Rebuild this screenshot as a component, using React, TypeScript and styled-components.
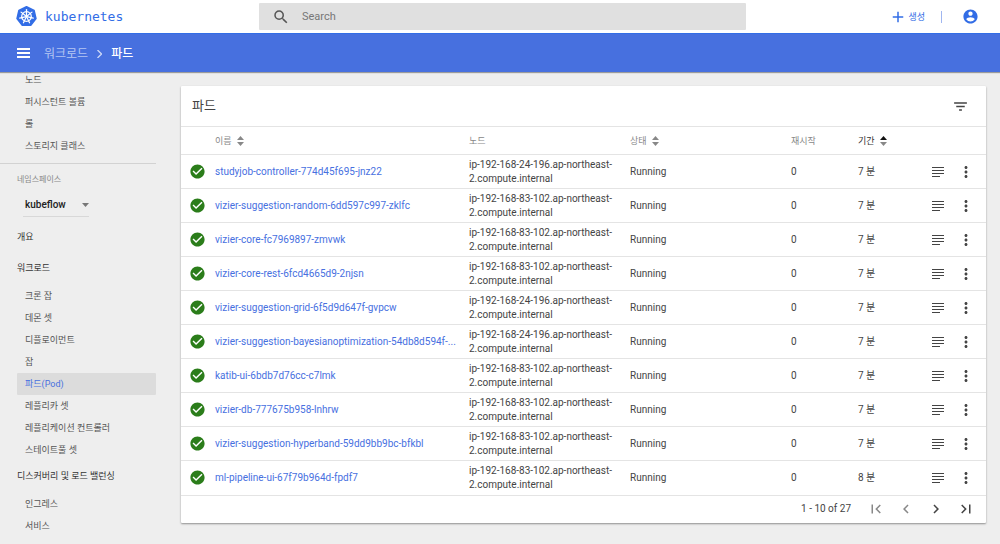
import React from "react";
import styled, { createGlobalStyle } from "styled-components";

const GlobalStyle = createGlobalStyle`
  * { box-sizing: border-box; }
  html, body, #root { height: 100%; }
  body {
    margin: 0;
    background: #eee;
    color: #444;
    font-family: Roboto, "Noto Sans CJK KR", sans-serif;
    font-size: 10px;
    line-height: 14px;
    overflow: hidden;
  }
  button, input, select { font: inherit; color: inherit; }
  a { color: inherit; text-decoration: none; }
`;

const Page = styled.div`
  display: flex;
  flex-direction: column;
  height: 100%;
`;

const TopBar = styled.header`
  display: flex;
  align-items: center;
  flex: none;
  height: 33px;
  padding: 0 21px 0 16px;
  background: #fff;
`;

const Brand = styled.a`
  display: flex;
  align-items: center;
  gap: 8px;
  width: 243px;
  color: #326de6;
  font-family: "DejaVu Sans Mono", monospace;
  font-size: 13px;
`;

const SearchBox = styled.label`
  display: flex;
  align-items: center;
  gap: 12px;
  width: 487px;
  height: 27px;
  padding: 0 13px;
  border-radius: 1px;
  background: #e0e0e0;
  color: #555;
`;

const SearchInput = styled.input`
  flex: 1;
  min-width: 0;
  padding: 0;
  border: 0;
  outline: 0;
  background: none;
  font-size: 11px;
  &::placeholder { color: #777; opacity: 1; }
`;

const Actions = styled.div`
  display: flex;
  align-items: center;
  margin-left: auto;
  color: #326de6;
  font-size: 9px;
`;

const PlainButton = styled.button<{ $gap?: number }>`
  display: flex;
  align-items: center;
  gap: ${(p) => p.$gap ?? 5}px;
  padding: 0;
  border: 0;
  background: none;
  cursor: pointer;
`;

const Separator = styled.span`
  width: 1px;
  height: 12px;
  margin: 0 20px 0 16px;
  background: #a0b6f0;
`;

const NavBar = styled.div`
  position: relative;
  z-index: 1;
  display: flex;
  align-items: center;
  flex: none;
  height: 39px;
  padding: 0 17px;
  border-top: 1px solid #326de6;
  background: #4770df;
  box-shadow: 0 1px 1px rgba(0, 0, 0, 0.35);
  color: #fff;
`;

const Crumbs = styled.nav`
  display: flex;
  align-items: center;
  gap: 9px;
  padding-top: 2px;
  margin-left: 14px;
  font-size: 12px;
  a { color: #b5c6f2; }
  strong { font-weight: 500; }
`;

const Body = styled.div`
  display: flex;
  flex: 1;
  min-height: 0;
`;

const Sidebar = styled.nav`
  flex: none;
  width: 156px;
  overflow: hidden;
  font-size: 9px;
`;

const NavList = styled.ul<{ $scrolled?: boolean }>`
  margin: ${(p) => (p.$scrolled ? "-3px" : "1px")} 0 0;
  padding: 0 0 0 17px;
  list-style: none;
`;

const NavItem = styled.a<{ $active?: boolean }>`
  display: block;
  height: 22px;
  padding-left: 8px;
  border-radius: 1px;
  line-height: 22px;
  background: ${(p) => (p.$active ? "#dcdcdc" : "none")};
  color: ${(p) => (p.$active ? "#4770df" : "#555")};
`;

const NavHeading = styled.a`
  display: block;
  height: 31px;
  padding-left: 17px;
  line-height: 31px;
  color: #333;
`;

const NamespaceBlock = styled.div`
  margin-top: 6px;
  padding: 9px 0 5px 17px;
  border-top: 1px solid #d2d2d2;
  label { display: block; color: #888; font-size: 8px; }
`;

const SelectWrap = styled.div`
  display: flex;
  align-items: center;
  width: 66px;
  height: 24px;
  margin: 6px 0 0 6px;
  border-bottom: 1px solid #d8d8d8;
  color: #777;
  font-size: 10px;
`;

const NamespaceSelect = styled.select`
  flex: 1;
  min-width: 0;
  padding: 0 0 0 2px;
  border: 0;
  outline: 0;
  appearance: none;
  background: none;
  color: #222;
  font-weight: 500;
`;

const Main = styled.main`
  flex: 1;
  min-width: 0;
  padding: 14px 14px 0 25px;
`;

const Card = styled.section`
  border-radius: 1px;
  background: #fff;
  box-shadow: 0 1px 2px rgba(0, 0, 0, 0.4);
`;

const CardHeader = styled.div`
  display: flex;
  align-items: center;
  justify-content: space-between;
  height: 40px;
  padding: 0 17px 0 11px;
  h2 { margin: 0; font-size: 13px; font-weight: 400; }
`;

const Table = styled.table`
  width: 100%;
  border-collapse: collapse;
  table-layout: fixed;
`;

const Col = styled.col<{ $w?: string }>`
  width: ${(p) => p.$w ?? "auto"};
`;

const HeadCell = styled.th<{ $active?: boolean }>`
  height: 28px;
  padding: 0;
  border-top: 1px solid #e4e4e4;
  color: ${(p) => (p.$active ? "#333" : "#888")};
  font-size: 9px;
  font-weight: 400;
  text-align: left;
  button { color: inherit; }
`;

const Cell = styled.td`
  height: 34px;
  padding: 0;
  border-top: 1px solid #e4e4e4;
  white-space: nowrap;
`;

const NodeCell = styled(Cell)`
  white-space: normal;
`;

const StatusCell = styled(Cell)`
  padding-left: 8px;
  color: #2b7d1a;
  svg { display: block; }
`;

const LogCell = styled(Cell)`
  padding-left: 4px;
`;

const MenuCell = styled(Cell)`
  padding-left: 7px;
`;

const PodLink = styled.a`
  color: #4770df;
`;

const Pager = styled.div`
  display: flex;
  align-items: center;
  justify-content: flex-end;
  gap: 12px;
  height: 28px;
  padding-right: 11px;
  border-top: 1px solid #e4e4e4;
  button:disabled { color: #888; }
`;

const PagerRange = styled.span`
  margin-right: 4px;
`;

const Icon = ({ d, size = 18 }: { d: string; size?: number }) => (
  <svg width={size} height={size} viewBox="0 0 24 24" fill="currentColor" aria-hidden="true">
    <path d={d} />
  </svg>
);

const icons = {
  search: "M15.5 14h-.79l-.28-.27A6.47 6.47 0 0 0 16 9.5 6.5 6.5 0 1 0 9.5 16c1.61 0 3.09-.59 4.23-1.57l.27.28v.79l5 4.99L20.49 19l-4.99-5zm-6 0C7.01 14 5 11.99 5 9.5S7.01 5 9.5 5 14 7.01 14 9.5 11.99 14 9.5 14z",
  add: "M19 13h-6v6h-2v-6H5v-2h6V5h2v6h6v2z",
  account: "M12 2C6.48 2 2 6.48 2 12s4.48 10 10 10 10-4.48 10-10S17.52 2 12 2zm0 3c1.66 0 3 1.34 3 3s-1.34 3-3 3-3-1.34-3-3 1.34-3 3-3zm0 14.2a7.2 7.2 0 0 1-6-3.22c.03-1.99 4-3.08 6-3.08 1.99 0 5.97 1.09 6 3.08a7.2 7.2 0 0 1-6 3.22z",
  chevronRight: "M10 6 8.59 7.41 13.17 12l-4.58 4.59L10 18l6-6z",
  chevronLeft: "M15.41 7.41 14 6l-6 6 6 6 1.41-1.41L10.83 12z",
  first: "M18.41 16.59 13.82 12l4.59-4.59L17 6l-6 6 6 6zM6 6h2v12H6z",
  last: "M5.59 7.41 10.18 12l-4.59 4.59L7 18l6-6-6-6zM16 6h2v12h-2z",
  filter: "M10 18h4v-2h-4v2zM3 6v2h18V6H3zm3 7h12v-2H6v2z",
  check: "M12 2C6.48 2 2 6.48 2 12s4.48 10 10 10 10-4.48 10-10S17.52 2 12 2zm-2 15-5-5 1.41-1.41L10 14.17l7.59-7.59L19 8l-9 9z",
  more: "M12 8c1.1 0 2-.9 2-2s-.9-2-2-2-2 .9-2 2 .9 2 2 2zm0 2c-1.1 0-2 .9-2 2s.9 2 2 2 2-.9 2-2-.9-2-2-2zm0 6c-1.1 0-2 .9-2 2s.9 2 2 2 2-.9 2-2-.9-2-2-2z",
};

const spokes = [0, 51.43, 102.86, 154.29, 205.71, 257.14, 308.57];

const Logo = () => (
  <svg width="21" height="21" viewBox="0 0 42 42" aria-hidden="true">
    <path
      d="M21 1.5 36.2 8.8 40 25.2 29.5 38.5H12.5L2 25.2 5.8 8.8z"
      fill="#326de6"
      stroke="#326de6"
      strokeWidth="3"
      strokeLinejoin="round"
    />
    <g fill="none" stroke="#fff" strokeWidth="2.5" strokeLinecap="round">
      <circle cx="21" cy="21" r="9.6" />
      {spokes.map((a) => (
        <path key={a} d="M21 18V7" transform={`rotate(${a} 21 21)`} />
      ))}
    </g>
    <circle cx="21" cy="21" r="2.8" fill="#fff" />
  </svg>
);

const SortIcon = ({ ascending }: { ascending?: boolean }) => (
  <svg width="7" height="10" viewBox="0 0 7 10" aria-hidden="true">
    <path d="M3.5 0 7 4H0z" fill={ascending ? "#111" : "#888"} />
    <path d="M3.5 10 0 6h7z" fill="#888" />
  </svg>
);

const LogsIcon = () => (
  <svg width="18" height="18" viewBox="0 0 18 18" fill="none" stroke="currentColor" aria-hidden="true">
    <path d="M3 4.5h12M3 7.5h12M3 10.5h12M3 13.5h8" strokeWidth="1.2" />
  </svg>
);

const nodeA = "ip-192-168-24-196.ap-northeast-2.compute.internal";
const nodeB = "ip-192-168-83-102.ap-northeast-2.compute.internal";

const pods = [
  { name: "studyjob-controller-774d45f695-jnz22", node: nodeA, age: "7 분" },
  { name: "vizier-suggestion-random-6dd597c997-zklfc", node: nodeB, age: "7 분" },
  { name: "vizier-core-fc7969897-zmvwk", node: nodeB, age: "7 분" },
  { name: "vizier-core-rest-6fcd4665d9-2njsn", node: nodeB, age: "7 분" },
  { name: "vizier-suggestion-grid-6f5d9d647f-gvpcw", node: nodeA, age: "7 분" },
  { name: "vizier-suggestion-bayesianoptimization-54db8d594f-...", node: nodeA, age: "7 분" },
  { name: "katib-ui-6bdb7d76cc-c7lmk", node: nodeB, age: "7 분" },
  { name: "vizier-db-777675b958-lnhrw", node: nodeB, age: "7 분" },
  { name: "vizier-suggestion-hyperband-59dd9bb9bc-bfkbl", node: nodeB, age: "7 분" },
  { name: "ml-pipeline-ui-67f79b964d-fpdf7", node: nodeB, age: "8 분" },
];

const clusterItems = ["노드", "퍼시스턴트 볼륨", "롤", "스토리지 클래스"];
const workloadItems = [
  "크론 잡",
  "데몬 셋",
  "디플로이먼트",
  "잡",
  "파드(Pod)",
  "레플리카 셋",
  "레플리케이션 컨트롤러",
  "스테이트풀 셋",
];
const discoveryItems = ["인그레스", "서비스"];

const NavGroup = ({ items, active, scrolled }: { items: string[]; active?: string; scrolled?: boolean }) => (
  <NavList $scrolled={scrolled}>
    {items.map((item) => (
      <li key={item}>
        <NavItem href="#" $active={item === active}>{item}</NavItem>
      </li>
    ))}
  </NavList>
);

export default function App() {
  return (
    <Page>
      <GlobalStyle />
      <TopBar>
        <Brand href="#">
          <Logo />
          kubernetes
        </Brand>
        <SearchBox>
          <Icon d={icons.search} />
          <SearchInput type="search" placeholder="Search" aria-label="Search" />
        </SearchBox>
        <Actions>
          <PlainButton type="button" $gap={1}>
            <Icon d={icons.add} />
            생성
          </PlainButton>
          <Separator />
          <PlainButton type="button" aria-label="Account">
            <Icon d={icons.account} size={17} />
          </PlainButton>
        </Actions>
      </TopBar>
      <NavBar>
        <PlainButton type="button" aria-label="Menu">
          <svg width="13" height="10" viewBox="0 0 13 10" fill="currentColor" aria-hidden="true">
            <path d="M0 0h13v2H0zM0 4h13v2H0zM0 8h13v2H0z" />
          </svg>
        </PlainButton>
        <Crumbs>
          <a href="#">워크로드</a>
          <svg width="5" height="8" viewBox="0 0 5 8" fill="none" stroke="#cdd8f6" aria-hidden="true">
            <path d="M.5 0l4 4-4 4" strokeWidth="1.3" />
          </svg>
          <strong>파드</strong>
        </Crumbs>
      </NavBar>
      <Body>
        <Sidebar>
          <NavGroup items={clusterItems} scrolled />
          <NamespaceBlock>
            <label htmlFor="namespace">네임스페이스</label>
            <SelectWrap>
              <NamespaceSelect id="namespace" defaultValue="kubeflow">
                <option>kubeflow</option>
              </NamespaceSelect>
              <svg width="8" height="4" viewBox="0 0 8 4" fill="currentColor" aria-hidden="true">
                <path d="M1 0h7L4.500 4z" />
              </svg>
            </SelectWrap>
          </NamespaceBlock>
          <NavHeading href="#">개요</NavHeading>
          <NavHeading href="#">워크로드</NavHeading>
          <NavGroup items={workloadItems} active="파드(Pod)" />
          <NavHeading href="#">디스커버리 및 로드 밸런싱</NavHeading>
          <NavGroup items={discoveryItems} />
        </Sidebar>
        <Main>
          <Card>
            <CardHeader>
              <h2>파드</h2>
              <PlainButton type="button" aria-label="Filter">
                <Icon d={icons.filter} size={17} />
              </PlainButton>
            </CardHeader>
            <Table>
              <colgroup>
                <Col $w="34px" />
                <Col />
                <Col $w="20%" />
                <Col $w="20%" />
                <Col $w="67px" />
                <Col $w="67px" />
                <Col $w="25px" />
                <Col $w="36px" />
              </colgroup>
              <thead>
                <tr>
                  <HeadCell />
                  <HeadCell><PlainButton type="button">이름 <SortIcon /></PlainButton></HeadCell>
                  <HeadCell>노드</HeadCell>
                  <HeadCell><PlainButton type="button">상태 <SortIcon /></PlainButton></HeadCell>
                  <HeadCell>재시작</HeadCell>
                  <HeadCell $active><PlainButton type="button">기간 <SortIcon ascending /></PlainButton></HeadCell>
                  <HeadCell />
                  <HeadCell />
                </tr>
              </thead>
              <tbody>
                {pods.map((pod) => (
                  <tr key={pod.name}>
                    <StatusCell><Icon d={icons.check} size={17} /></StatusCell>
                    <Cell><PodLink href="#">{pod.name}</PodLink></Cell>
                    <NodeCell>{pod.node}</NodeCell>
                    <Cell>Running</Cell>
                    <Cell>0</Cell>
                    <Cell>{pod.age}</Cell>
                    <LogCell>
                      <PlainButton type="button" aria-label="Logs"><LogsIcon /></PlainButton>
                    </LogCell>
                    <MenuCell>
                      <PlainButton type="button" aria-label="Actions"><Icon d={icons.more} /></PlainButton>
                    </MenuCell>
                  </tr>
                ))}
              </tbody>
            </Table>
            <Pager>
              <PagerRange>1 - 10 of 27</PagerRange>
              <PlainButton type="button" aria-label="First page" disabled><Icon d={icons.first} /></PlainButton>
              <PlainButton type="button" aria-label="Previous page" disabled><Icon d={icons.chevronLeft} /></PlainButton>
              <PlainButton type="button" aria-label="Next page"><Icon d={icons.chevronRight} /></PlainButton>
              <PlainButton type="button" aria-label="Last page"><Icon d={icons.last} /></PlainButton>
            </Pager>
          </Card>
        </Main>
      </Body>
    </Page>
  );
}
